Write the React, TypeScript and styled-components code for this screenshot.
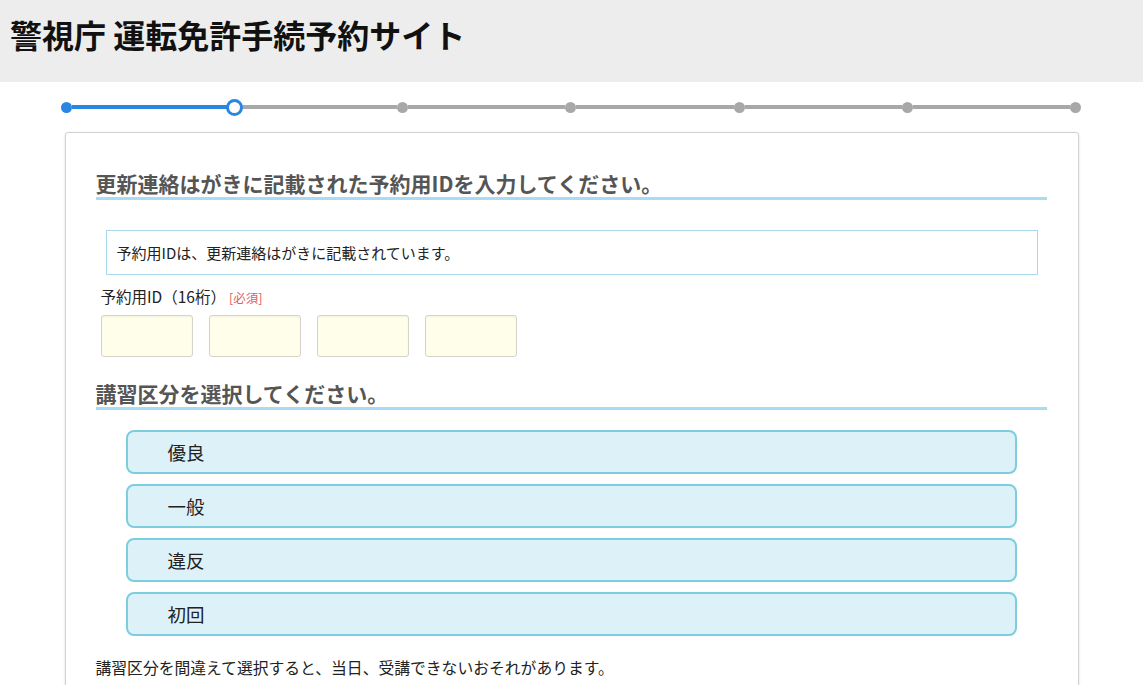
import styled, { createGlobalStyle } from "styled-components";

const GlobalStyle = createGlobalStyle`
    html, body {
        margin: 0;
        padding: 0;
        background: #ffffff;
    }
    body {
        font-family: "Noto Sans CJK JP", "Noto Sans", sans-serif;
        color: #222;
    }
`;

const Header = styled.header`
    height: 82px;
    background-color: #ededed;
    padding: 14px 0 0 10px;
    box-sizing: border-box;
`;

const SiteTitle = styled.h1`
    margin: 0;
    font-size: 32px;
    line-height: 40px;
    font-weight: bold;
    color: #111;
`;

const Page = styled.main`
    width: 1014px;
    margin: 0 auto;
    padding-top: 19px;
`;

const Stepper = styled.div`
    display: flex;
    align-items: center;
    height: 12px;
    margin: 0 -3px 19px -4px;
`;

const Dot = styled.span<{ $state: "done" | "current" | "todo" }>`
    flex: none;
    box-sizing: border-box;
    border-radius: 50%;
    width: ${(p) => (p.$state === "current" ? "17px" : "11px")};
    height: ${(p) => (p.$state === "current" ? "17px" : "11px")};
    margin: ${(p) => (p.$state === "current" ? "0 -3px" : "0")};
    background: ${(p) =>
        p.$state === "done" ? "#2a86e0" : p.$state === "current" ? "#ffffff" : "#a8a8a8"};
    border: ${(p) => (p.$state === "current" ? "3px solid #2a86e0" : "none")};
    position: relative;
    z-index: 1;
`;

const Track = styled.span<{ $active: boolean }>`
    flex: 1;
    height: 4px;
    background: ${(p) => (p.$active ? "#2a86e0" : "#a8a8a8")};
`;

const Card = styled.section`
    border: 1px solid #d2d2d2;
    border-radius: 3px;
    box-shadow: 0 1px 3px rgba(0, 0, 0, 0.12);
    padding: 37px 31px 30px 30px;
    background: #fff;
`;

const SectionTitle = styled.h2`
    margin: 0;
    font-size: 21px;
    line-height: 27px;
    font-weight: bold;
    color: #555;
    border-bottom: 3px solid #a9dcf2;
`;

const InfoBox = styled.div`
    margin: 30px 9px 0 10px;
    border: 1px solid #a9d8ea;
    height: 45px;
    box-sizing: border-box;
    padding: 0 10px;
    display: flex;
    align-items: center;
    font-size: 15px;
    color: #222;
`;

const FieldLabel = styled.div`
    margin: 11px 0 0 5px;
    font-size: 15.5px;
    line-height: 20px;
    color: #222;

    span {
        margin-left: 3px;
        font-size: 12.5px;
        color: #e06060;
    }
`;

const IdInputs = styled.div`
    display: flex;
    gap: 16px;
    margin: 7px 0 0 5px;
`;

const IdInput = styled.input`
    width: 92px;
    height: 42px;
    box-sizing: border-box;
    border: 1px solid #d6d4c8;
    border-radius: 3px;
    background: #fffeea;
    box-shadow: inset 0 1px 2px rgba(0, 0, 0, 0.05);
`;

const SecondTitle = styled(SectionTitle)`
    margin-top: 23px;
`;

const OptionList = styled.div`
    display: flex;
    flex-direction: column;
    gap: 10px;
    margin: 20px 30px 0 30px;
`;

const OptionButton = styled.button`
    height: 44px;
    box-sizing: border-box;
    border: 2px solid #7dcde0;
    border-radius: 8px;
    background: #ddf1f9;
    text-align: left;
    padding: 0 0 0 40px;
    font-family: inherit;
    font-size: 18.5px;
    color: #222;
    cursor: pointer;
`;

const Notice = styled.p`
    margin: 21px 0 0 0;
    font-size: 15.8px;
    line-height: 22px;
    color: #222;
`;

const steps: ("done" | "current" | "todo")[] = ["done", "current", "todo", "todo", "todo", "todo", "todo"];
const courses = ["優良", "一般", "違反", "初回"];

export default function App() {
    return (
        <>
            <GlobalStyle />
            <Header>
                <SiteTitle>警視庁 運転免許手続予約サイト</SiteTitle>
            </Header>
            <Page>
                <Stepper>
                    {steps.map((s, i) => (
                        <span key={`step_${i}`} style={{ display: "contents" }}>
                            {i > 0 ? <Track $active={i === 1} /> : null}
                            <Dot $state={s} />
                        </span>
                    ))}
                </Stepper>
                <Card>
                    <SectionTitle>更新連絡はがきに記載された予約用IDを入力してください。</SectionTitle>
                    <InfoBox>予約用IDは、更新連絡はがきに記載されています。</InfoBox>
                    <FieldLabel>
                        予約用ID（16桁）<span>[必須]</span>
                    </FieldLabel>
                    <IdInputs>
                        <IdInput />
                        <IdInput />
                        <IdInput />
                        <IdInput />
                    </IdInputs>
                    <SecondTitle>講習区分を選択してください。</SecondTitle>
                    <OptionList>
                        {courses.map((c) => (
                            <OptionButton key={c}>{c}</OptionButton>
                        ))}
                    </OptionList>
                    <Notice>講習区分を間違えて選択すると、当日、受講できないおそれがあります。</Notice>
                </Card>
            </Page>
        </>
    );
}
